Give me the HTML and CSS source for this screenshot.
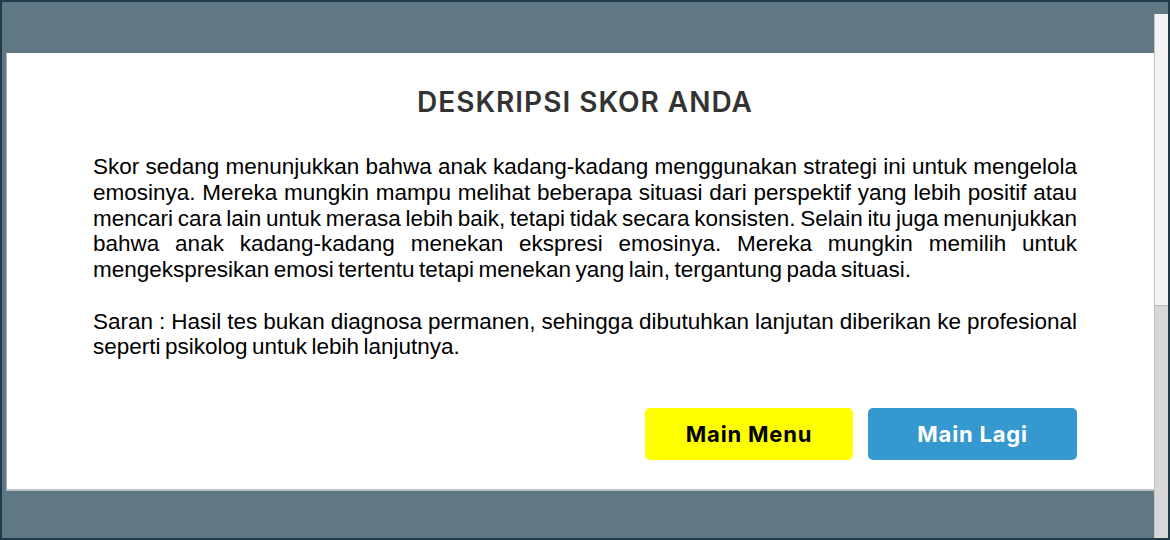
FILE: index.html
```html
<!DOCTYPE html>
<html lang="id">
<head>
<meta charset="utf-8">
<title>Deskripsi Skor Anda</title>
<link rel="stylesheet" href="styles.css">
</head>
<body>
<div class="screen">
  <div class="main">
    <section class="panel">
      <h1 class="title">DESKRIPSI SKOR ANDA</h1>
      <p class="desc">Skor sedang menunjukkan bahwa anak kadang-kadang menggunakan strategi ini untuk mengelola emosinya. Mereka mungkin mampu melihat beberapa situasi dari perspektif yang lebih positif atau mencari cara lain untuk merasa lebih baik, tetapi tidak secara konsisten. Selain itu juga menunjukkan bahwa anak kadang-kadang menekan ekspresi emosinya. Mereka mungkin memilih untuk mengekspresikan emosi tertentu tetapi menekan yang lain, tergantung pada situasi.</p>
      <p class="desc saran">Saran : Hasil tes bukan diagnosa permanen, sehingga dibutuhkan lanjutan diberikan ke profesional seperti psikolog untuk lebih lanjutnya.</p>
      <div class="actions">
        <button class="btn btn-menu">Main Menu</button>
        <button class="btn btn-again">Main Lagi</button>
      </div>
    </section>
  </div>
  <div class="scrollbar">
    <div class="thumb"></div>
    <div class="track"></div>
  </div>
</div>
</body>
</html>
```

FILE: styles.css
```css
* { box-sizing: border-box; }
html, body { margin: 0; padding: 0; }
body {
  width: 1170px;
  height: 540px;
  overflow: hidden;
  background: #1f3b4b;
}
.screen {
  width: 1170px;
  height: 540px;
  border: 2px solid #1f3b4b;
  border-radius: 3px;
  background: #607884;
  display: flex;
}
.main {
  flex: 1;
  padding-top: 51px;
  padding-left: 4px;
}
.panel {
  width: 1148px;
  height: 438px;
  background: #ffffff;
  border-left: 1px solid #a9b1b6;
  border-bottom: 2px solid #b9c0c4;
  padding: 33px 77px 0 86px;
  display: flex;
  flex-direction: column;
}
.title {
  margin: 0;
  font-family: Inter, "Noto Sans", sans-serif;
  font-weight: 600;
  font-size: 28px;
  line-height: 33px;
  color: #333333;
  text-align: center;
  letter-spacing: 1px;
}
.desc {
  margin: 35px 0 0;
  font-family: "Liberation Sans", Arial, sans-serif;
  font-size: 22.5px;
  line-height: 25.75px;
  word-spacing: -1.8px;
  color: #000000;
  text-align: justify;
}
.saran {
  margin-top: 25.75px;
}
.actions {
  margin-top: 48px;
  display: flex;
  justify-content: flex-end;
  gap: 15px;
}
.btn {
  width: 208px;
  height: 52px;
  border: none;
  border-radius: 5px;
  font-family: Inter, "Noto Sans", sans-serif;
  font-weight: 700;
  font-size: 22px;
  letter-spacing: 0.8px;
  padding: 0;
}
.btn-menu { background: #ffff00; color: #000000; }
.btn-again { background: #3598cf; color: #ffffff; width: 209px; }
.scrollbar {
  width: 14px;
  margin-top: 12px;
  display: flex;
  flex-direction: column;
}
.thumb {
  height: 292px;
  background: #f3f3f3;
  border-left: 1px solid #c4c4c4;
  border-bottom: 1px solid #bdbdbd;
}
.track {
  flex: 1;
  background: #d7d7d7;
  border-left: 1px solid #c4c4c4;
}
```
